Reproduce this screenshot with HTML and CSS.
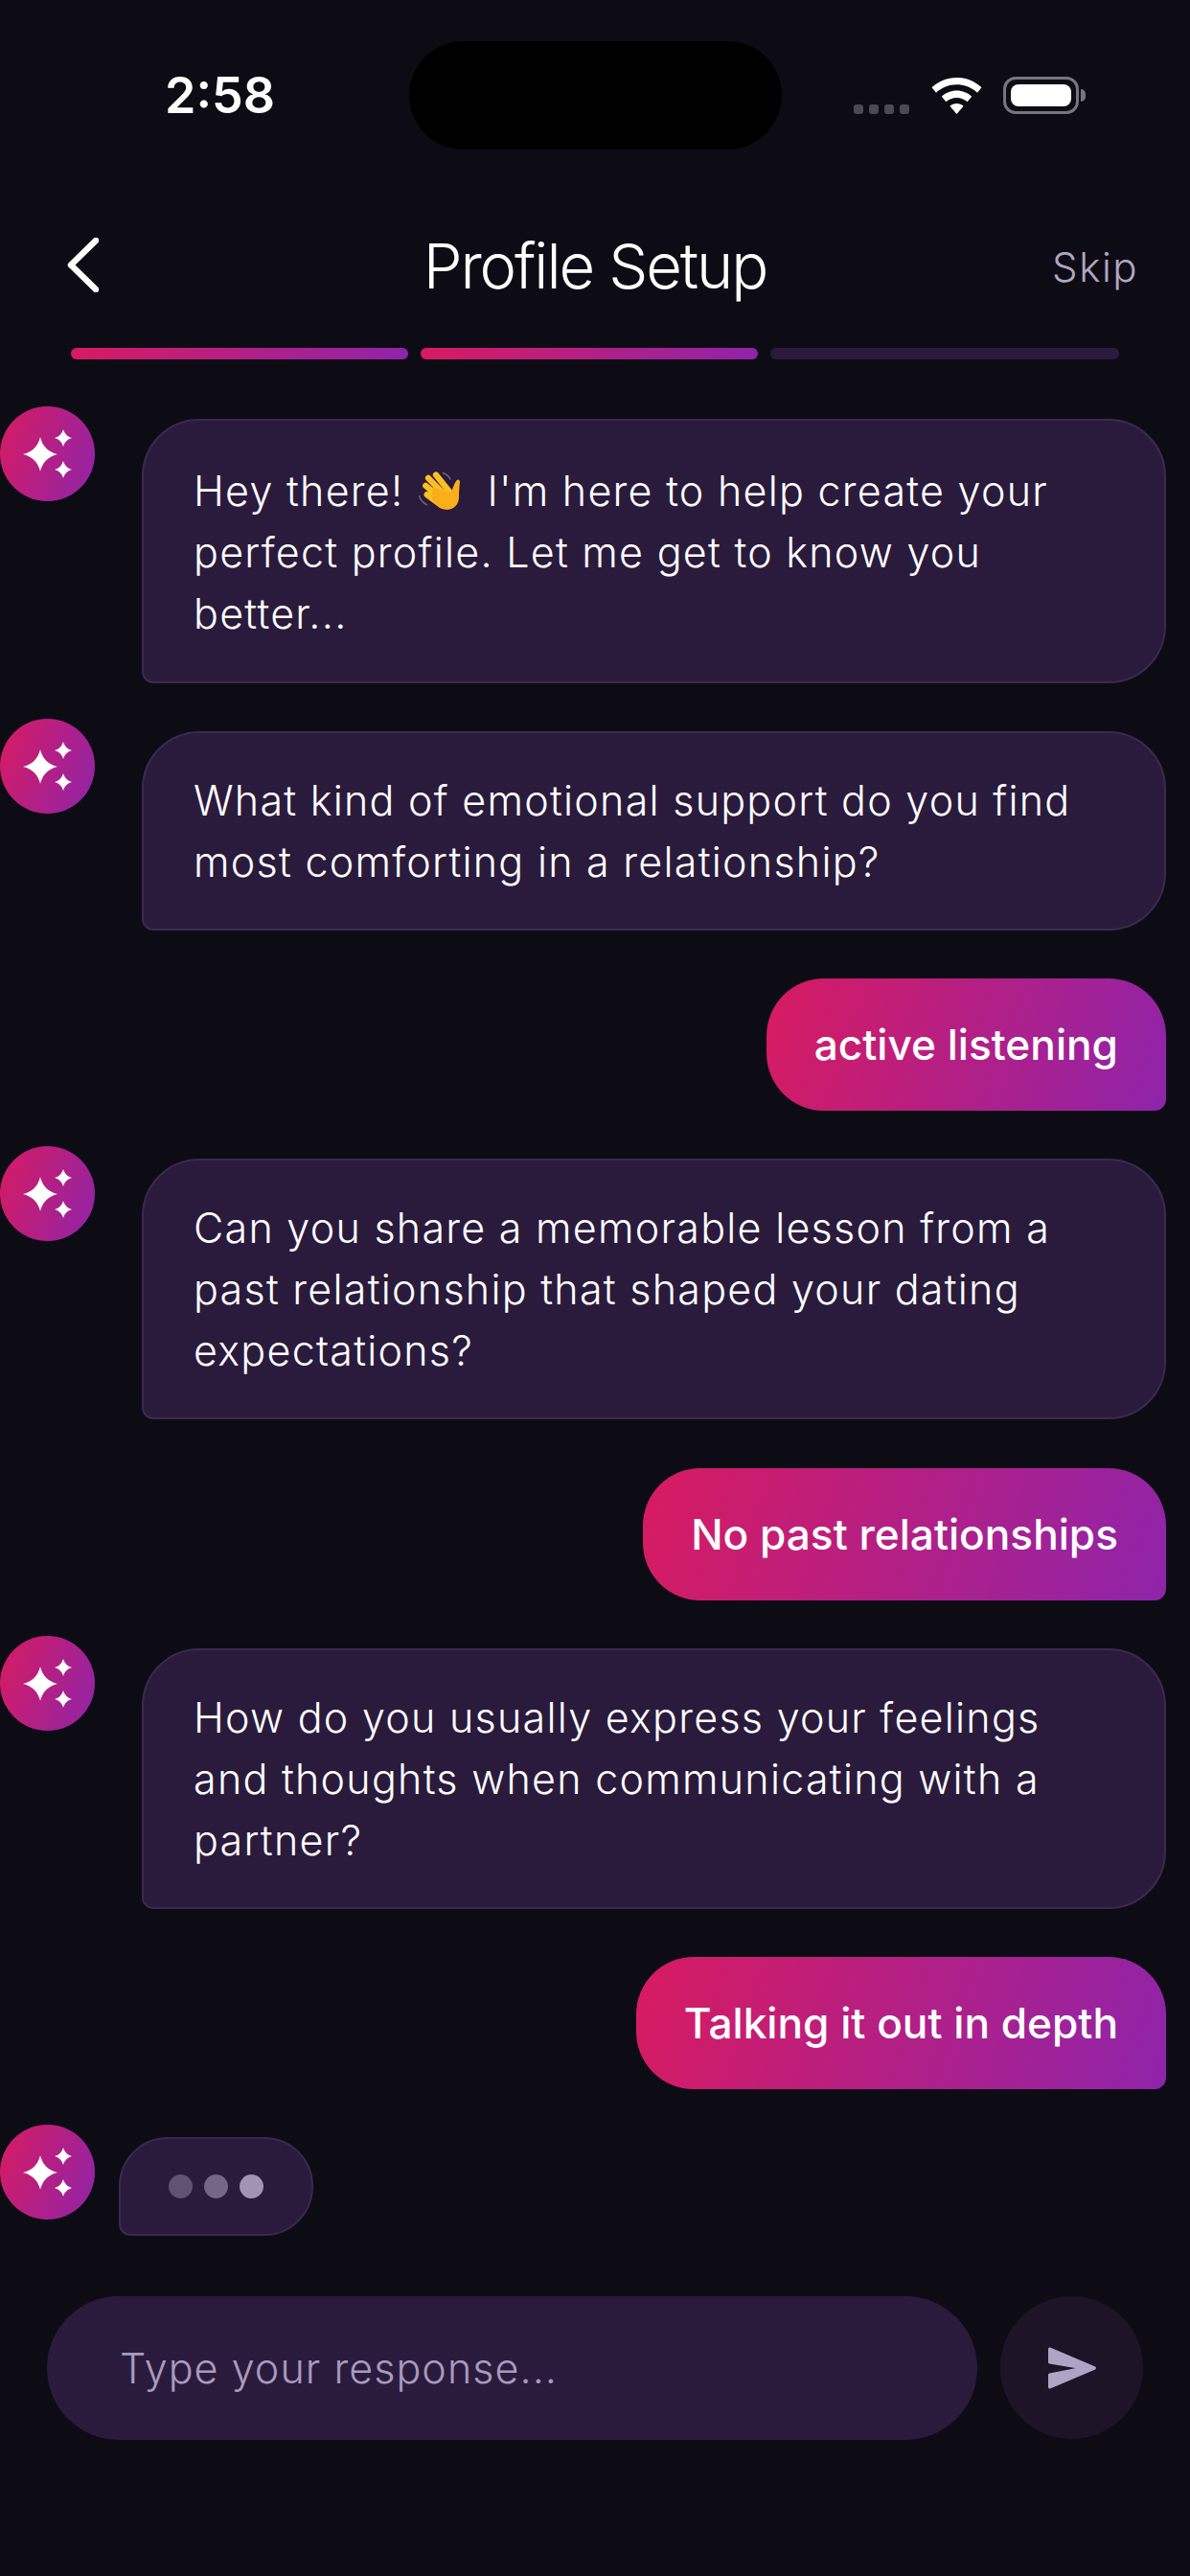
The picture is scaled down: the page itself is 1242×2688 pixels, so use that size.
FILE: index.html
```html
<!DOCTYPE html>
<html lang="en">
<head>
<meta charset="utf-8">
<title>Profile Setup</title>
<link rel="stylesheet" href="styles.css">
</head>
<body>
<div class="screen">
  <div class="island"></div>
  <div class="status">
    <div class="time">2:58</div>
    <div class="status-icons">
      <div class="signal"><i></i><i></i><i></i><i></i></div>
      <svg class="wifi" width="53" height="38" viewBox="0 0 53 38"><path d="M26.500 0C16.500 0 7.500 3.700 0.500 10.300L5 15.800C10.700 10.400 18.200 7.300 26.500 7.300S42.300 10.400 48 15.800L52.500 10.300C45.500 3.700 36.500 0 26.500 0Z" fill="#fff"/><path d="M26.500 13.500C20.500 13.500 15 15.800 10.800 19.700L15.400 25.300C18.300 22.600 22.200 20.900 26.500 20.900S34.700 22.600 37.600 25.300L42.200 19.700C38 15.800 32.500 13.500 26.500 13.500Z" fill="#fff"/><path d="M26.500 27C23.800 27 21.300 28 19.400 29.700L26.500 38L33.600 29.700C31.700 28 29.200 27 26.500 27Z" fill="#fff"/></svg>
      <div class="battery"><div class="battery-fill"></div><div class="battery-nub"></div></div>
    </div>
  </div>

  <header class="header">
    <svg class="back" width="33" height="57" viewBox="0 0 33 57"><path d="M30 3L4 28.500L30 54" fill="none" stroke="#fff" stroke-width="6.500" stroke-linecap="round" stroke-linejoin="round"/></svg>
    <h1 class="title">Profile Setup</h1>
    <div class="skip">Skip</div>
  </header>

  <div class="progress">
    <div class="seg seg-on"></div>
    <div class="seg seg-on"></div>
    <div class="seg seg-off"></div>
  </div>

  <main class="chat">
    <div class="row">
      <div class="avatar"><svg width="99" height="99" viewBox="0 0 99 99"><path class="star" d="M42 32Q45.500 46.500 60 50Q45.500 53.500 42 68Q38.500 53.500 24 50Q38.500 46.500 42 32Z"/><path class="star" d="M66 24Q68 31 75 33Q68 35 66 42Q64 35 57 33Q64 31 66 24Z"/><path class="star" d="M66 57Q68 64 75 66Q68 68 66 75Q64 68 57 66Q64 64 66 57Z"/></svg></div>
      <div class="bubble bubble-first">Hey there!<svg class="wave" width="50" height="47" viewBox="100 30 150 140"><path d="M182 46C193 50 201 57 205 66M108 118C111 130 120 140 132 146" fill="none" stroke="#6f6a78" stroke-width="4" stroke-linecap="round"/><path d="M160 52L208 112M136 62L196 124M128 86L186 134M132 114L178 148" fill="none" stroke="#fbbf24" stroke-width="19" stroke-linecap="round"/><path d="M150 92L207 108C212 96 217 80 224 70C228 64 236 68 235 76C233 92 232 104 232 122C232 146 214 163 192 161C172 159 160 146 148 130Z" fill="#f9ae1c"/></svg>I'm here to help create your<br>perfect profile. Let me get to know you<br>better...</div>
    </div>
    <div class="row">
      <div class="avatar"><svg width="99" height="99" viewBox="0 0 99 99"><path class="star" d="M42 32Q45.500 46.500 60 50Q45.500 53.500 42 68Q38.500 53.500 24 50Q38.500 46.500 42 32Z"/><path class="star" d="M66 24Q68 31 75 33Q68 35 66 42Q64 35 57 33Q64 31 66 24Z"/><path class="star" d="M66 57Q68 64 75 66Q68 68 66 75Q64 68 57 66Q64 64 66 57Z"/></svg></div>
      <div class="bubble">What kind of emotional support do you find most comforting in a relationship?</div>
    </div>
    <div class="row row-me"><div class="mine">active listening</div></div>
    <div class="row">
      <div class="avatar"><svg width="99" height="99" viewBox="0 0 99 99"><path class="star" d="M42 32Q45.500 46.500 60 50Q45.500 53.500 42 68Q38.500 53.500 24 50Q38.500 46.500 42 32Z"/><path class="star" d="M66 24Q68 31 75 33Q68 35 66 42Q64 35 57 33Q64 31 66 24Z"/><path class="star" d="M66 57Q68 64 75 66Q68 68 66 75Q64 68 57 66Q64 64 66 57Z"/></svg></div>
      <div class="bubble">Can you share a memorable lesson from a past relationship that shaped your dating expectations?</div>
    </div>
    <div class="row row-me"><div class="mine">No past relationships</div></div>
    <div class="row">
      <div class="avatar"><svg width="99" height="99" viewBox="0 0 99 99"><path class="star" d="M42 32Q45.500 46.500 60 50Q45.500 53.500 42 68Q38.500 53.500 24 50Q38.500 46.500 42 32Z"/><path class="star" d="M66 24Q68 31 75 33Q68 35 66 42Q64 35 57 33Q64 31 66 24Z"/><path class="star" d="M66 57Q68 64 75 66Q68 68 66 75Q64 68 57 66Q64 64 66 57Z"/></svg></div>
      <div class="bubble">How do you usually express your feelings and thoughts when communicating with a partner?</div>
    </div>
    <div class="row row-me"><div class="mine">Talking it out in depth</div></div>
    <div class="row">
      <div class="avatar"><svg width="99" height="99" viewBox="0 0 99 99"><path class="star" d="M42 32Q45.500 46.500 60 50Q45.500 53.500 42 68Q38.500 53.500 24 50Q38.500 46.500 42 32Z"/><path class="star" d="M66 24Q68 31 75 33Q68 35 66 42Q64 35 57 33Q64 31 66 24Z"/><path class="star" d="M66 57Q68 64 75 66Q68 68 66 75Q64 68 57 66Q64 64 66 57Z"/></svg></div>
      <div class="typing"><span class="dot dot-1"></span><span class="dot dot-2"></span><span class="dot dot-3"></span></div>
    </div>
  </main>

  <footer class="composer">
    <div class="field">Type your response...</div>
    <div class="send"><svg width="52" height="44" viewBox="0 0 52 44"><path d="M2.500 2L49.500 22L2.500 42L2.500 29L38 22L2.500 16Z" fill="#b0a4c4" stroke="#b0a4c4" stroke-width="3" stroke-linejoin="round"/></svg></div>
  </footer>
</div>
</body>
</html>
```

FILE: styles.css
```css
* { box-sizing: border-box; }
html, body { margin: 0; padding: 0; background: #0d0c15; }
.screen {
  position: relative;
  width: 1242px;
  height: 2688px;
  overflow: hidden;
  background: #0d0c15;
  color: #fff;
  font-family: Inter, "Liberation Sans", sans-serif;
}
.island {
  position: absolute;
  left: 427px;
  top: 43px;
  width: 389px;
  height: 113px;
  border-radius: 57px;
  background: #000;
}
.status {
  height: 218px;
  padding: 72px 116px 0 172px;
  display: flex;
  justify-content: space-between;
  align-items: flex-start;
}
.time {
  font-size: 52px;
  font-weight: 600;
  line-height: 56px;
}
.status-icons {
  display: flex;
  align-items: flex-start;
  padding-top: 8px;
}
.signal {
  display: flex;
  gap: 6px;
  margin-top: 29px;
  margin-right: 23px;
}
.signal i {
  display: block;
  width: 10px;
  height: 10px;
  border-radius: 3px;
  background: #4b4a50;
}
.wifi { margin-right: 22px; margin-top: 1px; }
.battery {
  position: relative;
  width: 79px;
  height: 39px;
  padding: 5px;
  border: 3px solid #77767c;
  border-radius: 13px;
}
.battery-fill {
  width: 100%;
  height: 100%;
  border-radius: 8px;
  background: #fff;
}
.battery-nub {
  position: absolute;
  right: -10px;
  top: 10px;
  width: 5px;
  height: 13px;
  border-radius: 0 5px 5px 0;
  background: #77767c;
}
.header {
  position: relative;
  height: 120px;
  display: flex;
  align-items: center;
  justify-content: center;
}
.back {
  position: absolute;
  left: 70px;
  top: 30px;
}
.title {
  margin: 0;
  font-size: 65px;
  font-weight: 350;
  line-height: 80px;
  letter-spacing: -2.100px;
}
.skip {
  position: absolute;
  left: 1098px;
  top: 36px;
  font-size: 42px;
  font-weight: 300;
  line-height: 50px;
  letter-spacing: 1.600px;
  color: #b0a6c2;
}
.progress {
  margin: 25px 74px 0;
  display: flex;
  gap: 13px;
}
.seg {
  width: 352px;
  height: 12px;
  border-radius: 6px;
}
.seg-on { background: linear-gradient(100deg, #d81b60, #8e24aa); }
.seg-off { flex: 1; background: #2a1b3d; }
.chat {
  padding: 62px 25px 0 0;
  display: flex;
  flex-direction: column;
  gap: 50.150px;
}
.row {
  display: flex;
  align-items: flex-start;
}
.row-me { justify-content: flex-end; }
.avatar {
  flex: none;
  width: 99px;
  height: 99px;
  margin-top: -13px;
  border-radius: 50%;
  background: linear-gradient(110deg, #d81b60, #8e24aa);
}
.avatar svg { display: block; }
.star { fill: #fff; }
.bubble {
  margin-left: auto;
  width: 1069px;
  padding: 38px 50px 38px 52px;
  border: 2px solid #3a2a4f;
  border-radius: 60px 60px 60px 12px;
  background: #2a1b3d;
  font-size: 43px;
  font-weight: 340;
  line-height: 64px;
  letter-spacing: 1.260px;
}
.bubble-first { padding-top: 41px; padding-bottom: 39px; }
.wave {
  display: inline-block;
  vertical-align: -7px;
  margin: 0 23px 0 14px;
}
.mine {
  padding: 40px 50px;
  border-radius: 60px 60px 12px 60px;
  background: linear-gradient(108deg, #d81b60, #8e24aa);
  font-size: 44.200px;
  font-weight: 450;
  line-height: 58px;
}
.typing {
  margin-left: 25px;
  width: 203px;
  height: 103px;
  padding-left: 50px;
  display: flex;
  align-items: center;
  gap: 12px;
  border: 2px solid #3a2a4f;
  border-radius: 51px 51px 51px 12px;
  background: #2a1b3d;
}
.dot {
  width: 25px;
  height: 25px;
  border-radius: 50%;
  background: #b0a4c4;
}
.dot-1 { opacity: .4; }
.dot-2 { opacity: .55; }
.dot-3 { opacity: .88; }
.composer {
  margin: 63px 49px 0;
  display: flex;
  align-items: center;
  gap: 24px;
}
.field {
  width: 971px;
  height: 150px;
  padding-left: 76px;
  display: flex;
  align-items: center;
  border-radius: 75px;
  background: #2a1b3d;
  font-size: 43px;
  font-weight: 340;
  letter-spacing: 1.050px;
  color: #a89bbd;
}
.send {
  width: 149px;
  height: 149px;
  display: flex;
  align-items: center;
  justify-content: center;
  border-radius: 50%;
  background: #1e1428;
}
```
